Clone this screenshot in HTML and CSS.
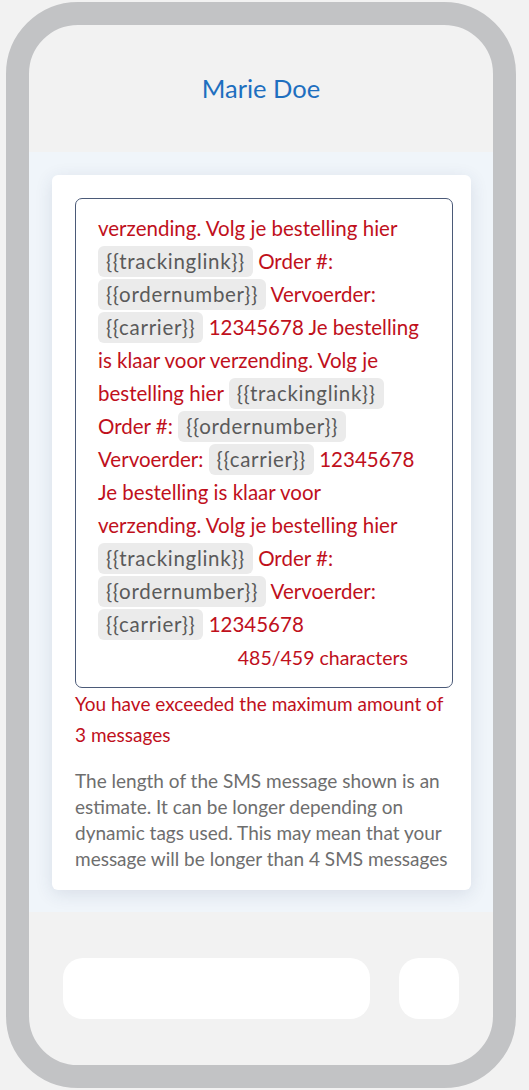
FILE: index.html
```html
<!DOCTYPE html>
<html lang="nl">
<head>
<meta charset="utf-8">
<title>SMS preview</title>
<link rel="stylesheet" href="styles.css">
</head>
<body>
<div class="phone">
  <header class="header"><h1 class="contact">Marie Doe</h1></header>
  <main class="content">
    <section class="card">
      <div class="box">
        <p class="message">verzending. Volg je bestelling hier<br><span class="tag">{{trackinglink}}</span> Order #:<br><span class="tag">{{ordernumber}}</span> Vervoerder:<br><span class="tag">{{carrier}}</span> 12345678 Je bestelling<br>is klaar voor verzending. Volg je<br>bestelling hier <span class="tag">{{trackinglink}}</span><br>Order #: <span class="tag">{{ordernumber}}</span><br>Vervoerder: <span class="tag">{{carrier}}</span> 12345678<br>Je bestelling is klaar voor<br>verzending. Volg je bestelling hier<br><span class="tag">{{trackinglink}}</span> Order #:<br><span class="tag">{{ordernumber}}</span> Vervoerder:<br><span class="tag">{{carrier}}</span> 12345678</p>
        <p class="counter">485/459 characters</p>
      </div>
      <p class="error">You have exceeded the maximum amount of<br>3 messages</p>
      <p class="note">The length of the SMS message shown is an<br>estimate. It can be longer depending on<br>dynamic tags used. This may mean that your<br>message will be longer than 4 SMS messages</p>
    </section>
  </main>
  <footer class="footer">
    <div class="input"></div>
    <div class="send"></div>
  </footer>
</div>
</body>
</html>
```

FILE: styles.css
```css
* { box-sizing: border-box; }
html, body { margin: 0; padding: 0; }
body {
  background: #f2f2f2;
  font-family: "Lato", "Open Sans", sans-serif;
  width: 529px;
  height: 1090px;
  overflow: hidden;
}
.phone {
  margin: 2px 0 0 6px;
  width: 510px;
  height: 1086px;
  border: 23px solid #c2c3c5;
  border-radius: 72px;
  background: #f2f2f2;
  display: flex;
  flex-direction: column;
  overflow: hidden;
}
.header {
  height: 127px;
  display: flex;
  align-items: center;
  justify-content: center;
  flex: none;
}
.contact {
  margin: 0;
  font-size: 25.5px;
  font-weight: 400;
  color: #1e6fbf;
  line-height: 1;
}
.content {
  background: #f0f5fa;
  padding: 23px 22px 22px 23px;
  height: 760px;
  flex: none;
}
.card {
  background: #fff;
  border-radius: 6px;
  box-shadow: 0 4px 18px rgba(40, 60, 100, 0.12);
  padding: 23px 18px 21px 23px;
  height: 715px;
}
.box {
  border: 1px solid #4b5a78;
  border-radius: 7px;
  padding: 13px 44px 12px 22px;
}
.message, .counter {
  margin: 0;
  font-size: 20.5px;
  line-height: 33px;
  color: #c0101c;
  white-space: nowrap;
}
.counter {
  font-size: 19.5px;
  text-align: right;
  line-height: 34px;
}
.tag {
  display: inline-block;
  background: #ebebeb;
  color: #5a5a5a;
  border-radius: 6px;
  padding: 0 8px;
  letter-spacing: 0.7px;
  line-height: 31px;
  vertical-align: top;
  margin: 1px 0;
}
.error {
  margin: 0;
  font-size: 19px;
  line-height: 31px;
  color: #c0101c;
  white-space: nowrap;
}
.note {
  margin: 18px 0 0;
  font-size: 19px;
  line-height: 26px;
  color: #6e6e6e;
  white-space: nowrap;
}
.footer {
  flex: 1;
  display: flex;
  gap: 29px;
  padding: 46px 34px 0;
}
.input {
  width: 307px;
  height: 61px;
  background: #fff;
  border-radius: 20px;
}
.send {
  width: 60px;
  height: 61px;
  background: #fff;
  border-radius: 20px;
}
```
